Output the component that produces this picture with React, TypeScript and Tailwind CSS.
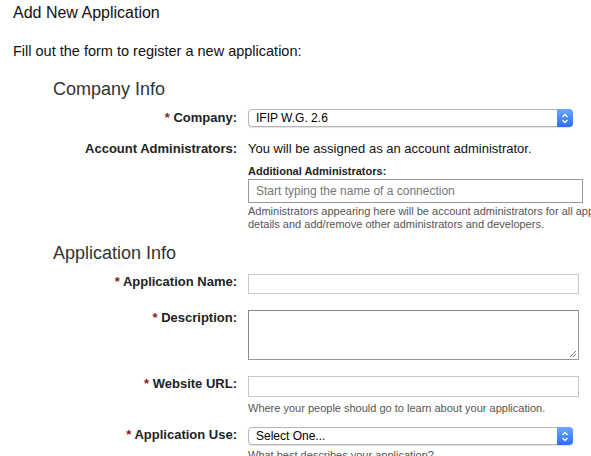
import React from 'react';

const Req: React.FC = () => <span className="text-[#8b1a1a]">* </span>;

const MacSelect: React.FC<{ value: string; width: string }> = ({ value, width }) => (
    <div
        className={`relative flex h-[18px] items-center rounded-[4px] border border-[#b5b5b5] bg-white shadow-[0_1px_1px_rgba(0,0,0,0.12)] ${width}`}
    >
        <span className="pl-[7px] text-[12px] leading-none text-black">{value}</span>
        <div className="absolute -top-px -right-px -bottom-px flex w-[16px] items-center justify-center rounded-r-[4px] bg-gradient-to-b from-[#6aa8ff] to-[#2c6cf5]">
            <svg width="8" height="11" viewBox="0 0 8 11" fill="none" stroke="white" strokeWidth="1.3">
                <path d="M1.5 4 L4 1.5 L6.5 4" />
                <path d="M1.5 7 L4 9.5 L6.5 7" />
            </svg>
        </div>
    </div>
);

const Label: React.FC<{ children: React.ReactNode; className?: string }> = ({ children, className }) => (
    <div className={`text-right text-[13px] font-bold text-[#222] ${className ?? ''}`}>{children}</div>
);

export default function App() {
    return (
        <div className="h-screen overflow-hidden bg-white font-['Liberation_Sans',Arial,sans-serif] text-[#111]">
            <h1 className="px-[13px] pt-[3px] text-[16px] leading-[20px]">Add New Application</h1>
            <p className="mt-[20px] px-[13px] text-[14.5px] leading-[17px] whitespace-nowrap">
                Fill out the form to register a new application:
            </p>

            <h2 className="mt-[18px] pl-[53px] text-[18px] leading-[22px] text-[#333]">Company Info</h2>
            <div className="mt-[9px] grid grid-cols-[237px_1fr] gap-x-[11px]">
                <Label className="leading-[18px]">
                    <Req />Company:
                </Label>
                <MacSelect value="IFIP W.G. 2.6" width="w-[325px]" />

                <Label className="mt-[13px] leading-[17px]">Account Administrators:</Label>
                <div className="mt-[13px] whitespace-nowrap">
                    <div className="text-[13px] leading-[17px]">You will be assigned as an account administrator.</div>
                    <div className="mt-[8px] text-[11px] leading-[13px] font-bold text-[#222]">Additional Administrators:</div>
                    <div className="mt-[1px] flex h-[24px] w-[335px] items-center border border-[#999] px-[7px] text-[12px] text-[#777]">
                        Start typing the name of a connection
                    </div>
                    <p className="mt-[2px] text-[11px] leading-[13px] text-[#555]">
                        Administrators appearing here will be account administrators for all applications and can edit application
                        <br />
                        details and add/remove other administrators and developers.
                    </p>
                </div>
            </div>

            <h2 className="mt-[11px] pl-[53px] text-[18px] leading-[22px] text-[#333]">Application Info</h2>
            <div className="mt-[10px] grid grid-cols-[237px_1fr] gap-x-[11px]">
                <Label className="leading-[16px]">
                    <Req />Application Name:
                </Label>
                <div className="h-[20px] w-[331px] border border-[#c8c8c8]" />

                <Label className="mt-[16px] leading-[16px]">
                    <Req />Description:
                </Label>
                <div className="relative mt-[16px] h-[50px] w-[331px] border border-[#888] border-b-[#999] border-r-[#999]">
                    <svg className="absolute right-[1px] bottom-[1px]" width="8" height="8" viewBox="0 0 8 8" stroke="#555" strokeWidth="0.8">
                        <path d="M1 7 L7 1" />
                        <path d="M4 7 L7 4" />
                    </svg>
                </div>

                <Label className="mt-[16px] leading-[16px]">
                    <Req />Website URL:
                </Label>
                <div className="mt-[16px]">
                    <div className="h-[21px] w-[331px] border border-[#c8c8c8]" />
                    <p className="mt-[5px] text-[11px] leading-[13px] text-[#555] whitespace-nowrap">
                        Where your people should go to learn about your application.
                    </p>
                </div>

                <Label className="mt-[12px] leading-[15px]">
                    <Req />Application Use:
                </Label>
                <div className="mt-[12px]">
                    <MacSelect value="Select One..." width="w-[325px]" />
                    <p className="mt-[4px] text-[11px] leading-[13px] text-[#555] whitespace-nowrap">
                        What best describes your application?
                    </p>
                </div>
            </div>
        </div>
    );
}
